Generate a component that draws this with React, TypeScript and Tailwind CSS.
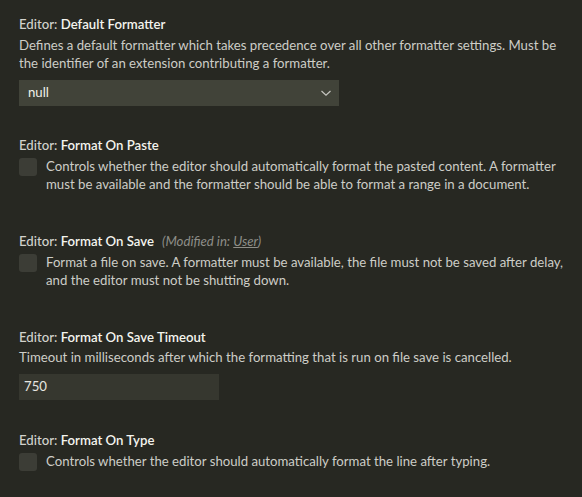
import React from 'react'

const Title: React.FC<{ label: string; modified?: boolean }> = ({ label, modified }) => {
  return (
    <div className="h-[18px] leading-[18px] whitespace-nowrap">
      <span className="font-medium text-[#d2d2cc]">Editor: </span>
      <span className="font-semibold text-[#f4f4ee]">{label}</span>
      {modified && (
        <span className="ml-[8px] italic text-[#8e8e88]">
          (Modified in: <span className="underline">User</span>)
        </span>
      )}
    </div>
  )
}

const Description: React.FC<{ lines: string[] }> = ({ lines }) => {
  return (
    <div className="leading-[18px] text-[#cdcdc7] whitespace-nowrap">
      {lines.map((l) => (
        <div key={l}>{l}</div>
      ))}
    </div>
  )
}

const Checkbox: React.FC = () => (
  <div className="mt-[1px] mr-[9px] h-[18px] w-[18px] shrink-0 rounded-[3px] bg-[#3c3d36]" />
)

const BoolSetting: React.FC<{ label: string; lines: string[]; modified?: boolean }> = ({
  label,
  lines,
  modified,
}) => {
  return (
    <div className="pb-[39px]">
      <Title label={label} modified={modified} />
      <div className="mt-[3px] flex flex-row">
        <Checkbox />
        <Description lines={lines} />
      </div>
    </div>
  )
}

const Chevron: React.FC = () => (
  <svg width="12" height="8" viewBox="0 0 12 8" fill="none">
    <path d="M1.5 2 L6 6.2 L10.5 2" stroke="#c6c6c0" strokeWidth="1.2" />
  </svg>
)

export default function App() {
  return (
    <div
      className="min-h-[497px] w-[582px] overflow-hidden bg-[#272822] pl-[19px] pt-[15px] text-[13.2px]"
      style={{ fontFamily: '"Segoe UI", Lato, "Open Sans", sans-serif' }}
    >
      <div className="pb-[30px]">
        <Title label="Default Formatter" />
        <div className="mt-[3px]">
          <Description
            lines={[
              'Defines a default formatter which takes precedence over all other formatter settings. Must be',
              'the identifier of an extension contributing a formatter.',
            ]}
          />
        </div>
        <div className="mt-[8px] flex h-[26px] w-[320px] flex-row items-center justify-between bg-[#414339] pl-[9px] pr-[7px]">
          <span className="text-[#f0f0ea]">null</span>
          <Chevron />
        </div>
      </div>

      <BoolSetting
        label="Format On Paste"
        lines={[
          'Controls whether the editor should automatically format the pasted content. A formatter',
          'must be available and the formatter should be able to format a range in a document.',
        ]}
      />

      <BoolSetting
        label="Format On Save"
        modified
        lines={[
          'Format a file on save. A formatter must be available, the file must not be saved after delay,',
          'and the editor must not be shutting down.',
        ]}
      />

      <div className="pb-[31px]">
        <Title label="Format On Save Timeout" />
        <div className="mt-[2px]">
          <Description
            lines={['Timeout in milliseconds after which the formatting that is run on file save is cancelled.']}
          />
        </div>
        <div className="mt-[8px] flex h-[26px] w-[200px] items-center bg-[#36372f] pl-[5px] text-[#e6e6e0]">
          750
        </div>
      </div>

      <BoolSetting
        label="Format On Type"
        lines={['Controls whether the editor should automatically format the line after typing.']}
      />
    </div>
  )
}
